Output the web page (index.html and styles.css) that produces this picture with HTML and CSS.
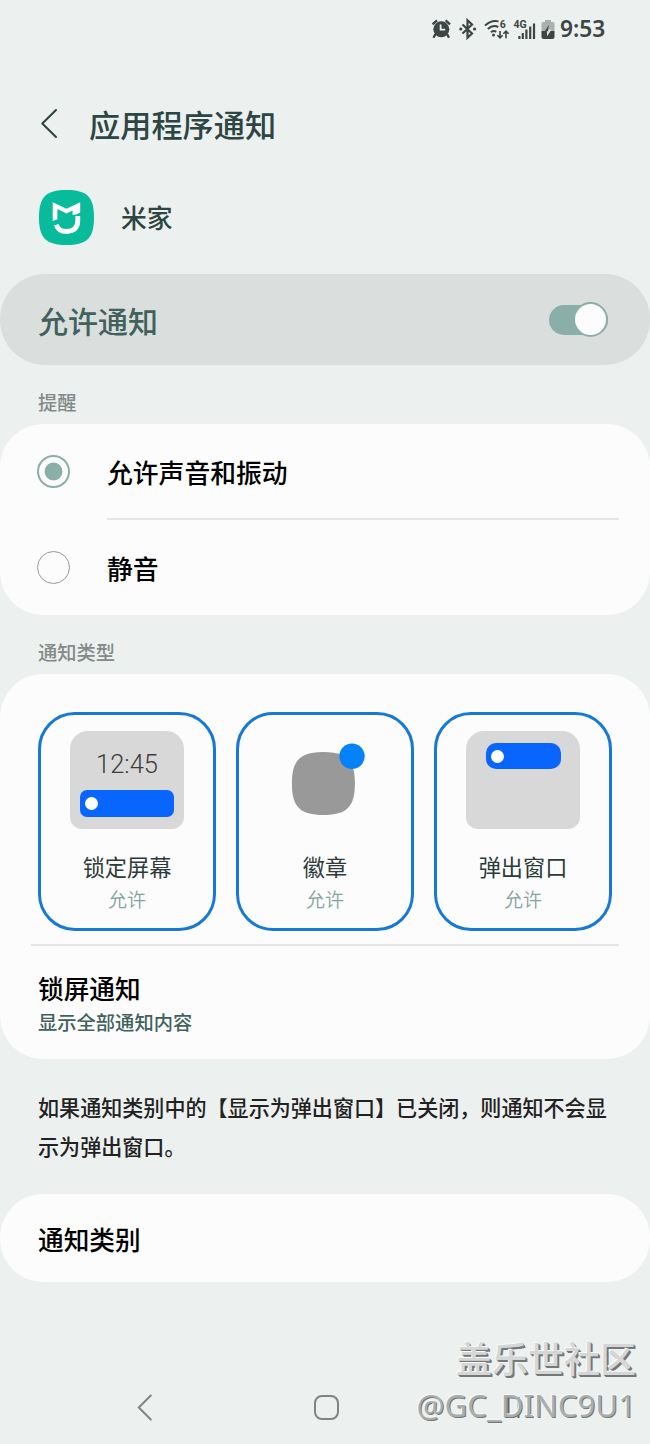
FILE: index.html
```html
<!DOCTYPE html>
<html lang="zh-CN">
<head>
    <meta charset="UTF-8">
    <meta name="viewport" content="width=device-width, initial-scale=1.0">
    <title>应用程序通知</title>
    <link rel="stylesheet" href="styles.css">
</head>
<body>
    <div class="screen">
        <div class="status-bar">
            <svg class="status-icons" width="140" height="24" viewBox="0 0 140 24">
                <!-- alarm -->
                <g fill="#3c4645">
                    <circle cx="11.3" cy="12.3" r="8"/>
                    <path d="M5.5 17l-2 3.700M17 17l2 3.700M2.600 7.400l4.400-4M20 7.400l-4.400-4" stroke="#3c4645" stroke-width="2.400"/>
                </g>
                <path d="M10.600 7.500v5.200h4.600" fill="none" stroke="#ecf0ef" stroke-width="1.800"/>
                <!-- bluetooth -->
                <path d="M32.500 7.500l9.500 9-4.500 4.200V3.300L42 7.500l-9.500 9" fill="none" stroke="#3c4645" stroke-width="2.200"/>
                <circle cx="30.800" cy="12" r="1.600" fill="#3c4645"/>
                <circle cx="44.600" cy="12" r="1.600" fill="#3c4645"/>
                <!-- wifi -->
                <g fill="none" stroke="#3c4645" stroke-width="2">
                    <path d="M55 8.600q6.500-6 13.500-4.200M57.800 12q5-4.600 10.500-2M61 15.200q2.700-2.200 5.200-.3"/>
                    <path d="M70 14v7M67.400 18.300l2.600 2.600 2.600-2.600M76 21.200v-7M73.400 16.800l2.600-2.600 2.600 2.600" stroke-width="1.600"/>
                </g>
                <circle cx="63.500" cy="18" r="1.500" fill="#3c4645"/>
                <text class="tiny" x="69.800" y="11.300">6</text>
                <text class="tiny" x="83.400" y="11">4G</text>
                <!-- signal -->
                <path d="M89.400 19v3M92.800 16v6M96.400 12.500v9.500M100.200 9.500v12.500M104 6.500v15.500" stroke="#3c4645" stroke-width="2.200"/>
                <!-- battery -->
                <path d="M115 3h6v2h2q1.500 0 1.500 1.500V14h-13V6.500Q111.500 5 113 5h2z" fill="#a9b0ae"/>
                <path d="M111.500 14h13v6q0 2-2 2h-9q-2 0-2-2z" fill="#3c4645"/>
                <path d="M119 8l-4.300 6.200h3z" fill="#3c4645"/>
                <path d="M121.500 12.500h-3v1.700h-1.700l.4 5z" fill="#dfe4e2"/>
            </svg>
            <span class="clock">9:53</span>
        </div>

        <div class="title-bar">
            <svg width="18" height="32" viewBox="0 0 18 32">
                <path d="M16 2L2.300 15.500l13.700 13.500" fill="none" stroke="#2d4543" stroke-width="2.100" stroke-linecap="round" stroke-linejoin="round"/>
            </svg>
            <h1>应用程序通知</h1>
        </div>

        <div class="app-row">
            <svg width="56" height="56" viewBox="0 0 56 56">
                <path d="M28.500 0C49 0 56 7 56 27.500S49 55 28.500 55 1 48 1 27.500 8 0 28.500 0z" fill="#08bb9a"/>
                <path d="M14.700 31V12.200L28.500 18.700 42.200 12.200V22.400Q39.500 24.800 34.600 25V20.500L28.500 23.400 19.400 19V29.200z" fill="#fff"/>
                <path d="M18.200 34.700Q20.500 41.500 28.500 41.500 39.800 41 39.800 30.500V26" fill="none" stroke="#fff" stroke-width="4.800"/>
            </svg>
            <span class="app-name">米家</span>
        </div>

        <div class="allow-bar">
            <span class="allow-text">允许通知</span>
            <div class="switch"><div class="knob"></div></div>
        </div>

        <div class="section-label">提醒</div>
        <div class="card sounds">
            <div class="radio-row">
                <div class="radio checked"></div>
                <div class="radio-text line">允许声音和振动</div>
            </div>
            <div class="radio-row">
                <div class="radio"></div>
                <div class="radio-text">静音</div>
            </div>
        </div>

        <div class="section-label">通知类型</div>
        <div class="card types">
            <div class="tiles">
                <div class="tile">
                    <div class="preview lock">
                        <span class="lock-time">12:45</span>
                        <div class="pill"><i></i></div>
                    </div>
                    <div class="tile-name">锁定屏幕</div>
                    <div class="tile-state">允许</div>
                </div>
                <div class="tile">
                    <svg class="badge-icon" width="114" height="98" viewBox="0 0 114 98">
                        <path d="M55.400 21C78.700 21 86.900 29.200 86.900 52.500S78.700 84 55.400 84 23.900 75.800 23.900 52.500 32.100 21 55.400 21z" fill="#999"/>
                        <circle cx="84" cy="25.300" r="12.700" fill="#0681fc"/>
                    </svg>
                    <div class="tile-name">徽章</div>
                    <div class="tile-state">允许</div>
                </div>
                <div class="tile">
                    <div class="preview popup">
                        <div class="pill"><i></i></div>
                    </div>
                    <div class="tile-name">弹出窗口</div>
                    <div class="tile-state">允许</div>
                </div>
            </div>
            <div class="lock-setting">
                <div class="item-title">锁屏通知</div>
                <div class="item-sub">显示全部通知内容</div>
            </div>
        </div>

        <p class="hint">如果通知类别中的【显示为弹出窗口】已关闭，则通知不会显示为弹出窗口。</p>

        <div class="card category">
            <div class="item-title">通知类别</div>
        </div>

        <div class="nav-bar">
            <svg width="650" height="40" viewBox="0 0 650 40" fill="none" stroke="#7f8584" stroke-width="2">
                <path d="M150.800 8.500L138.800 20.500l12 12" stroke-linecap="round"/>
                <rect x="315" y="9" width="23" height="23" rx="7"/>
                <path d="M508.500 10v21M518.500 10v21" stroke="#626867"/>
            </svg>
        </div>

        <div class="watermark">
            <div class="wm-name">盖乐世社区</div>
            <div class="wm-user">@GC_DINC9U1</div>
        </div>
    </div>
</body>
</html>
```
FILE: styles.css
```css
* {
    margin: 0;
    padding: 0;
    box-sizing: border-box;
}

body {
    font-family: "Noto Sans CJK SC", sans-serif;
    font-weight: 500;
    background: #ecf0ef;
    color: #000;
}

.screen {
    position: relative;
    width: 650px;
    height: 1444px;
    overflow: hidden;
}

.status-bar {
    height: 58px;
    padding-right: 44px;
    display: flex;
    justify-content: flex-end;
    align-items: center;
}

.status-icons {
    margin-right: -10px;
}

.tiny {
    font: bold 10.500px Roboto, sans-serif;
    fill: #3c4645;
}

.clock {
    width: 46px;
    font: 600 22.700px/30px "Noto Sans", sans-serif;
    color: #3c4645;
}

.title-bar {
    height: 131px;
    padding-left: 40px;
    display: flex;
    align-items: center;
    gap: 31px;
}

.title-bar h1 {
    font-size: 31.2px;
    font-weight: 500;
    color: #2d4543;
}

.app-row {
    height: 57px;
    padding: 1px 0 0 38px;
    display: flex;
    align-items: center;
    gap: 27px;
}

.app-name {
    padding-bottom: 3px;
    font-size: 25.8px;
    color: #2d4543;
}

.allow-bar {
    height: 91px;
    margin-top: 28px;
    padding: 0 42px 0 38px;
    border-radius: 45px;
    background: #dadedd;
    display: flex;
    align-items: center;
    justify-content: space-between;
}

.allow-text {
    font-size: 30px;
    color: #41615d;
}

.switch {
    width: 59px;
    height: 30px;
    border-radius: 15px;
    background: #8aafa9;
    display: flex;
    align-items: center;
    justify-content: flex-end;
}

.knob {
    flex: none;
    width: 35px;
    height: 35px;
    border: 2px solid #8aafa9;
    border-radius: 50%;
    background: #fcfcfc;
}

.section-label {
    height: 59px;
    padding: 23px 38px 0;
    font-size: 19.3px;
    line-height: 28px;
    color: #838a88;
}

.card {
    border-radius: 43px;
    background: #fcfcfc;
}

.sounds {
    height: 191px;
}

.radio-row {
    height: 96px;
    padding: 0 31px 0 37px;
    display: flex;
    align-items: center;
}

.radio {
    width: 33px;
    height: 33px;
    margin: -1px 37px 0 0;
    border: 1.500px solid #999;
    border-radius: 50%;
}

.radio.checked {
    border: 2px solid #8aafa9;
    background: radial-gradient(circle, #8aafa9 8.500px, transparent 9.300px);
}

.radio-text {
    flex: 1;
    height: 96px;
    font-size: 25.8px;
    line-height: 95px;
}

.radio-text.line {
    border-bottom: 2px solid #e4e5e5;
}

.types {
    height: 385px;
    padding: 38px 31px 0;
}

.tiles {
    height: 234px;
    padding: 0 7px;
    border-bottom: 2px solid #e4e5e5;
    display: flex;
    justify-content: space-between;
    align-items: flex-start;
}

.tile {
    width: 178px;
    height: 219px;
    padding-top: 16px;
    border: 3px solid #1679d6;
    border-radius: 37px;
    display: flex;
    flex-direction: column;
    align-items: center;
}

.preview {
    width: 114px;
    height: 98px;
    border-radius: 18px 18px 12px 12px;
    background: #d8d8d8;
    display: flex;
    flex-direction: column;
    align-items: center;
}

.lock-time {
    height: 59px;
    padding-top: 17px;
    font: 300 25.500px/32px Roboto, sans-serif;
    color: #3d3d3d;
}

.pill {
    width: 94px;
    height: 27px;
    padding-left: 5px;
    border-radius: 7px;
    background: #0866ff;
    display: flex;
    align-items: center;
}

.pill i {
    width: 13px;
    height: 13px;
    border-radius: 50%;
    background: #fff;
}

.popup {
    padding-top: 12px;
}

.popup .pill {
    width: 75px;
    height: 26px;
    border-radius: 10px;
}

.tile-name {
    margin-top: 20px;
    font-size: 22.2px;
    font-weight: 400;
    line-height: 34px;
    color: #2c3b39;
}

.tile-state {
    margin-top: 1px;
    font-size: 19px;
    font-weight: 350;
    line-height: 30px;
    color: #83a39e;
}

.lock-setting {
    padding: 23px 7px 0;
}

.item-title {
    font-size: 25.700px;
    line-height: 38px;
}

.item-sub {
    font-size: 19.300px;
    line-height: 30px;
    color: #41615d;
}

.hint {
    height: 135px;
    padding: 29px 38px 0;
    font-size: 21.070px;
    line-height: 39.300px;
    color: #222;
}

.category {
    height: 88px;
    padding: 26px 38px 0;
}

.nav-bar {
    margin-top: 105px;
}

/* community stamp over the bottom corner */
.watermark {
    position: absolute;
    right: 14px;
    bottom: 16px;
    text-align: right;
    white-space: nowrap;
}

.wm-name {
    font-size: 36px;
    font-weight: 500;
    line-height: 50px;
    color: #d5d7d6;
    text-shadow: -1px -1px 0 #f8faf9, 1px 1px 0 #777, 2px 2px 0 #777;
}

.wm-user {
    font: 31.200px/46px "Noto Sans", sans-serif;
    color: #a9adac;
    text-shadow: -1px -1px 0 #f8faf9, 1px 1px 0 #777;
}
```
